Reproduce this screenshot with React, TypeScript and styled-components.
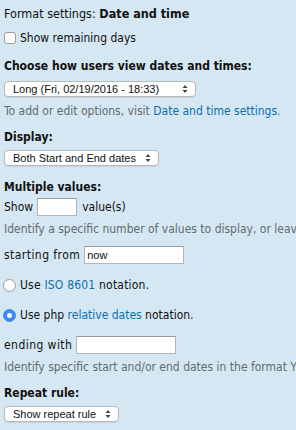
import React from "react";
import styled, { createGlobalStyle } from "styled-components";

const Global = createGlobalStyle`
  html, body {
    margin: 0;
    padding: 0;
    background: #d5e7f2;
    overflow: hidden;
  }
  body {
    font-family: "DejaVu Sans Condensed", "DejaVu Sans", Verdana, sans-serif;
    font-stretch: condensed;
    font-size: 12px;
    color: #111;
  }
`;

const Page = styled.div`
  width: 296px;
  height: 430px;
  padding: 4px 0 0 4px;
  box-sizing: border-box;
  white-space: nowrap;
  overflow: hidden;
`;

const Line = styled.div<{ $mt?: number; $h?: number }>`
  display: flex;
  align-items: center;
  height: ${(p) => p.$h ?? 18}px;
  margin-top: ${(p) => p.$mt ?? 0}px;
  white-space: pre;
`;

const Title = styled(Line)`
  font-size: 12.5px;
`;

const FieldRow = styled(Line)`
  letter-spacing: 0.45px;
`;

const RadioRow = styled(Line)`
  letter-spacing: 0.2px;
`;

const Strong = styled.span`
  font-weight: bold;
`;

const Heading = styled(Line)`
  font-weight: bold;
`;

const Desc = styled(Line)`
  color: #636b70;
  font-size: 12px;
`;

const Link = styled.a`
  color: #0b6fb1;
  text-decoration: none;
`;

const CheckBox = styled.span`
  width: 12px;
  height: 12px;
  box-sizing: border-box;
  border: 1px solid #9a9a9a;
  border-radius: 3px;
  background: #fff;
  margin-right: 4px;
  flex: none;
`;

const Radio = styled.span<{ $checked?: boolean }>`
  width: 13px;
  height: 13px;
  border-radius: 50%;
  box-sizing: border-box;
  border: 1px solid ${(p) => (p.$checked ? "#3b8cf0" : "#9a9a9a")};
  background: ${(p) => (p.$checked ? "#3b8cf0" : "#fff")};
  margin: 0 4px 0 -1px;
  flex: none;
  display: flex;
  align-items: center;
  justify-content: center;
  &::after {
    content: "";
    width: 5px;
    height: 5px;
    border-radius: 50%;
    background: ${(p) => (p.$checked ? "#fff" : "transparent")};
  }
`;

const SelectBox = styled.div<{ $w: number; $mt: number }>`
  position: relative;
  width: ${(p) => p.$w}px;
  height: 16px;
  margin-top: ${(p) => p.$mt}px;
  box-sizing: border-box;
  border: 1px solid #b9b9b9;
  border-radius: 4px;
  background: #fff;
  box-shadow: 0 1px 1px rgba(0, 0, 0, 0.08);
  font-family: "Liberation Sans", Arial, sans-serif;
  font-stretch: normal;
  font-size: 11px;
  color: #111;
  display: flex;
  align-items: center;
  padding-left: 8px;
`;

const Arrows = styled.svg`
  position: absolute;
  right: 7px;
  top: 2px;
`;

const Input = styled.span<{ $w: number }>`
  display: inline-block;
  width: ${(p) => p.$w}px;
  height: 18px;
  box-sizing: border-box;
  border: 1px solid #b5b5b5;
  border-top-color: #999;
  background: #fff;
  margin: 0 5px 0 4px;
  font-family: "Liberation Sans", Arial, sans-serif;
  font-stretch: normal;
  font-size: 11px;
  letter-spacing: 0;
  line-height: 16px;
  padding-left: 2px;
  color: #111;
`;

const Select = ({ w, mt, children }: { w: number; mt: number; children: React.ReactNode }) => (
  <SelectBox $w={w} $mt={mt}>
    {children}
    <Arrows width="6" height="10" viewBox="0 0 6 10">
      <path d="M0.5 4 L3 1 L5.5 4 Z M0.5 6 L3 9 L5.5 6 Z" fill="#444" />
    </Arrows>
  </SelectBox>
);

export default function App() {
  return (
    <>
      <Global />
      <Page>
        <Title>
          Format settings: <Strong>Date and time</Strong>
        </Title>
        <Line $mt={7}>
          <CheckBox />
          Show remaining days
        </Line>
        <Heading $mt={10}>Choose how users view dates and times:</Heading>
        <Select w={192} mt={6}>Long (Fri, 02/19/2016 - 18:33)</Select>
        <Desc $mt={6} $h={16}>
          To add or edit options, visit <Link>Date and time settings</Link>.
        </Desc>
        <Heading $mt={9}>Display:</Heading>
        <Select w={155} mt={4}>Both Start and End dates</Select>
        <Heading $mt={12}>Multiple values:</Heading>
        <Line $mt={2}>
          Show<Input $w={40} />value(s)
        </Line>
        <Desc $mt={5} $h={16}>
          Identify a specific number of values to display, or leave blank to show all values.
        </Desc>
        <FieldRow $mt={9}>
          starting from<Input $w={100}>now</Input>
        </FieldRow>
        <RadioRow $mt={12}>
          <Radio />
          Use <Link>ISO 8601</Link> notation.
        </RadioRow>
        <Line $mt={12}>
          <Radio $checked />
          Use php <Link>relative dates</Link> notation.
        </Line>
        <FieldRow $mt={12}>
          ending with<Input $w={100} />
        </FieldRow>
        <Desc $mt={5} $h={16}>
          Identify specific start and/or end dates in the format YYYY-MM-DD HH:MM:SS.
        </Desc>
        <Heading $mt={9}>Repeat rule:</Heading>
        <Select w={115} mt={4}>Show repeat rule</Select>
      </Page>
    </>
  );
}
